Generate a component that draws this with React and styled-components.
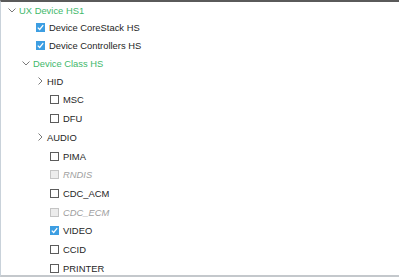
import React from "react"
import styled, { createGlobalStyle } from "styled-components"

const GlobalStyle = createGlobalStyle`
    html, body {
        margin: 0;
        padding: 0;
        background: #ffffff;
    }
`

const Panel = styled.div`
    width: 399px;
    height: 277px;
    box-sizing: border-box;
    border-top: 2px solid #5a5a5a;
    border-left: 1px solid #c9d2da;
    border-bottom: 2px solid #c4c8cc;
    background: #ffffff;
    overflow: hidden;
    font-family: "Liberation Sans", Arial, sans-serif;
    font-size: 9.4px;
`

const Tree = styled.ul`
    list-style: none;
    margin: 0;
    padding: 0;
    margin-top: -0.8px;
`

const Row = styled.li`
    display: flex;
    align-items: center;
    height: ${props => (props.$level > 1 ? 18.7 : 17.7)}px;
    padding-left: ${props => 7 + props.$level * 14 + (props.$leaf ? 14 : 0)}px;
    color: ${props => (props.$group ? "#3fb86b" : props.$disabled ? "#a0a0a0" : "#262626")};
    font-style: ${props => (props.$disabled ? "italic" : "normal")};
    white-space: nowrap;
`

const ChevronSlot = styled.span`
    display: inline-flex;
    align-items: center;
    justify-content: center;
    width: 8px;
    margin-right: 3px;
`

const Box = styled.span`
    display: inline-flex;
    align-items: center;
    justify-content: center;
    width: 9px;
    height: 9px;
    box-sizing: border-box;
    margin-right: 4px;
    border: 1px solid ${props => (props.$checked ? "#3d9ee2" : props.$disabled ? "#c4c4c4" : "#5c5c5c")};
    background: ${props => (props.$checked ? "#3d9ee2" : props.$disabled ? "#ececec" : "#ffffff")};
`

function Chevron({ open }) {
    return open ? (
        <svg width="8" height="5" viewBox="0 0 8 5">
            <path d="M0.5 0.5 L4 4 L7.5 0.5" fill="none" stroke="#7a7a7a" strokeWidth="1" />
        </svg>
    ) : (
        <svg width="5" height="8" viewBox="0 0 5 8">
            <path d="M0.5 0.5 L4 4 L0.5 7.5" fill="none" stroke="#7a7a7a" strokeWidth="1" />
        </svg>
    )
}

function Check({ checked, disabled }) {
    return (
        <Box $checked={checked} $disabled={disabled}>
            {checked && (
                <svg width="7" height="7" viewBox="0 0 7 7">
                    <path d="M0.8 3.6 L2.7 5.5 L6.2 1.2" fill="none" stroke="#ffffff" strokeWidth="1.3" />
                </svg>
            )}
        </Box>
    )
}

const items = [
    { label: "UX Device HS1", level: 0, kind: "group", open: true },
    { label: "Device CoreStack HS", level: 1, kind: "check", checked: true },
    { label: "Device Controllers HS", level: 1, kind: "check", checked: true },
    { label: "Device Class HS", level: 1, kind: "group", open: true },
    { label: "HID", level: 2, kind: "folder" },
    { label: "MSC", level: 2, kind: "check" },
    { label: "DFU", level: 2, kind: "check" },
    { label: "AUDIO", level: 2, kind: "folder" },
    { label: "PIMA", level: 2, kind: "check" },
    { label: "RNDIS", level: 2, kind: "check", disabled: true },
    { label: "CDC_ACM", level: 2, kind: "check" },
    { label: "CDC_ECM", level: 2, kind: "check", disabled: true },
    { label: "VIDEO", level: 2, kind: "check", checked: true },
    { label: "CCID", level: 2, kind: "check" },
    { label: "PRINTER", level: 2, kind: "check" },
]

export default function App() {
    return (
        <>
            <GlobalStyle />
            <Panel>
                <Tree>
                    {items.map((item, index) => (
                        <Row
                            key={index}
                            $level={item.level}
                            $leaf={item.kind === "check"}
                            $group={item.kind === "group"}
                            $disabled={item.disabled}
                        >
                            {item.kind === "check" ? (
                                <Check checked={item.checked} disabled={item.disabled} />
                            ) : (
                                <ChevronSlot>
                                    <Chevron open={item.open} />
                                </ChevronSlot>
                            )}
                            {item.label}
                        </Row>
                    ))}
                </Tree>
            </Panel>
        </>
    )
}
